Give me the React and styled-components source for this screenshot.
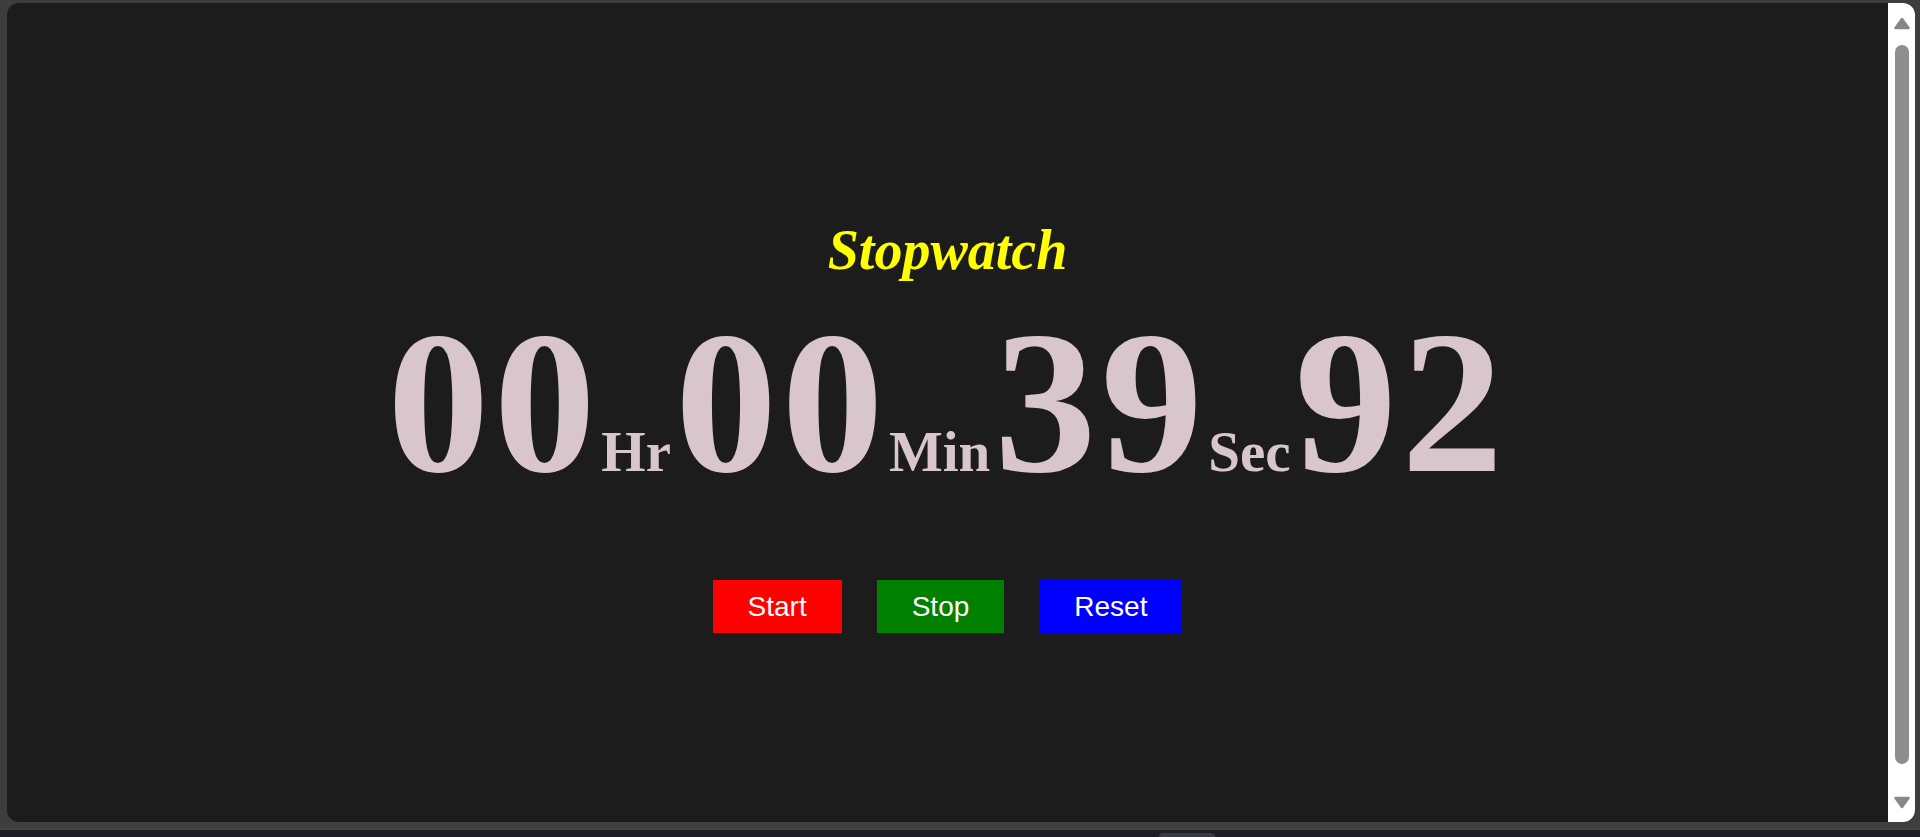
import React from "react";
import styled, { createGlobalStyle } from "styled-components";

const Global = createGlobalStyle`
  html, body { margin: 0; padding: 0; background: #3c3c3c; overflow: hidden; }
  #root { width: 1920px; height: 837px; }
`;

const Frame = styled.div`
  display: flex;
  flex-direction: column;
  width: 1920px;
  height: 837px;
  background: #3d3d3d;
`;

const Stage = styled.div`
  flex: 1;
  display: flex;
  padding: 3px 5px 0 7px;
  min-height: 0;
`;

const Panel = styled.div`
  flex: 1;
  display: flex;
  background: #1c1c1c;
  border-radius: 12px;
  overflow: hidden;
`;

const Content = styled.main`
  flex: 1;
  display: flex;
  flex-direction: column;
  align-items: center;
  padding-top: 215px;
`;

const Title = styled.h1`
  margin: 0;
  font-family: "Liberation Serif", "Times New Roman", serif;
  font-size: 56px;
  line-height: 64px;
  font-weight: 700;
  font-style: italic;
  color: #ffff00;
`;

const TimeRow = styled.div`
  display: flex;
  align-items: baseline;
  margin-top: 18px;
  font-family: "Liberation Serif", "Times New Roman", serif;
  font-weight: 700;
  color: #d8c6cc;
`;

const Digits = styled.span`
  font-size: 204px;
  line-height: 1;
  letter-spacing: 4.5px;
`;

const Unit = styled.span`
  font-size: 57px;
  line-height: 1;
  margin: 0 4px 0 1px;
`;

const ButtonRow = styled.div`
  display: flex;
  gap: 35px;
  margin-top: 76px;
`;

const Button = styled.button`
  border: none;
  border-radius: 0;
  padding: 10px 35px;
  font-family: "Liberation Sans", Arial, sans-serif;
  font-size: 28px;
  line-height: 33px;
  color: #ffffff;
  background: ${(p) => p.$bg};
  cursor: pointer;
`;

const Scrollbar = styled.div`
  width: 27px;
  flex: none;
  background: #ffffff;
  display: flex;
  flex-direction: column;
  align-items: center;
  padding: 14px 0 13px;
  box-sizing: border-box;
`;

const Thumb = styled.div`
  width: 14px;
  flex: 1;
  border-radius: 7px;
  background: #8e8e8e;
  margin: 15px 0 32px;
`;

const BottomBand = styled.div`
  height: 7px;
  flex: none;
  background: #3f3f3f;
  border-bottom: 1px solid #474747;
`;

const Dock = styled.div`
  height: 7px;
  flex: none;
  background: #1f1e25;
  display: flex;
  align-items: flex-end;
  padding-left: 1159px;
`;

const DockTab = styled.div`
  width: 56px;
  height: 4px;
  background: #3a3a42;
  border-radius: 4px 4px 0 0;
`;

const Arrow = ({ down }) => (
  <svg width="18" height="13" viewBox="0 0 18 13">
    <polygon
      points={down ? "2.5,2 15.5,2 9,11" : "2.5,11 15.5,11 9,2"}
      fill="#878787"
      stroke="#878787"
      strokeWidth="2.5"
      strokeLinejoin="round"
    />
  </svg>
);

export default function App() {
  return (
    <>
      <Global />
      <Frame>
        <Stage>
          <Panel>
            <Content>
              <Title>Stopwatch</Title>
              <TimeRow>
                <Digits>00</Digits>
                <Unit>Hr</Unit>
                <Digits>00</Digits>
                <Unit>Min</Unit>
                <Digits>39</Digits>
                <Unit>Sec</Unit>
                <Digits>92</Digits>
              </TimeRow>
              <ButtonRow>
                <Button $bg="#ff0000">Start</Button>
                <Button $bg="#008000">Stop</Button>
                <Button $bg="#0000ff">Reset</Button>
              </ButtonRow>
            </Content>
            <Scrollbar>
              <Arrow />
              <Thumb />
              <Arrow down />
            </Scrollbar>
          </Panel>
        </Stage>
        <BottomBand />
        <Dock>
          <DockTab />
        </Dock>
      </Frame>
    </>
  );
}
